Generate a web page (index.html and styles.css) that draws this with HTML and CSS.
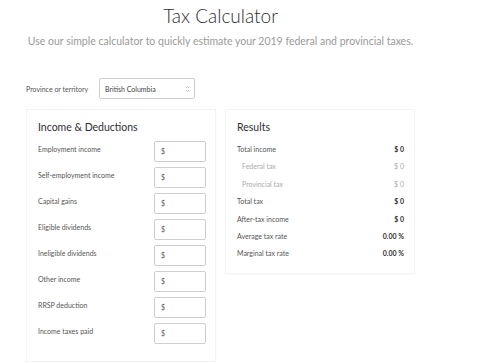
FILE: index.html
```html
<!DOCTYPE html>
<html lang="en">

<head>
    <meta charset="UTF-8">
    <meta name="viewport" content="width=device-width, initial-scale=1.0">
    <title>Tax Calculator</title>
    <link rel="stylesheet" href="styles.css">
</head>

<body>
    <div class="page">
        <h1 class="title">Tax Calculator</h1>
        <p class="intro">Use our simple calculator to quickly estimate your 2019 federal and provincial taxes.</p>

        <div class="province">
            <label class="province-label">Province or territory</label>
            <div class="select">
                <span>British Columbia</span>
                <svg class="select-arrows" width="5" height="8" viewBox="0 0 5 8">
                    <path d="M1 3 L2.5 1.5 L4 3 M1 5 L2.5 6.5 L4 5" fill="none" stroke="#b5b5b5" stroke-width="0.9" />
                </svg>
            </div>
        </div>

        <div class="cards">
            <div class="card">
                <h2 class="card-title">Income &amp; Deductions</h2>
                <div class="field"><span class="field-label">Employment income</span><div class="money">$</div></div>
                <div class="field"><span class="field-label">Self-employment income</span><div class="money">$</div></div>
                <div class="field"><span class="field-label">Capital gains</span><div class="money">$</div></div>
                <div class="field"><span class="field-label">Eligible dividends</span><div class="money">$</div></div>
                <div class="field"><span class="field-label">Ineligible dividends</span><div class="money">$</div></div>
                <div class="field"><span class="field-label">Other income</span><div class="money">$</div></div>
                <div class="field"><span class="field-label">RRSP deduction</span><div class="money">$</div></div>
                <div class="field"><span class="field-label">Income taxes paid</span><div class="money">$</div></div>
            </div>

            <div class="card results">
                <h2 class="card-title">Results</h2>
                <div class="result"><span>Total income</span><b>$ 0</b></div>
                <div class="result sub"><span>Federal tax</span><span>$ 0</span></div>
                <div class="result sub"><span>Provincial tax</span><span>$ 0</span></div>
                <div class="result"><span>Total tax</span><b>$ 0</b></div>
                <div class="result"><span>After-tax income</span><b>$ 0</b></div>
                <div class="result"><span>Average tax rate</span><b>0.00 %</b></div>
                <div class="result"><span>Marginal tax rate</span><b>0.00 %</b></div>
            </div>
        </div>
    </div>
</body>

</html>
```

FILE: styles.css
```css
body {
    margin: 0;
    padding: 0;
    background-color: #ffffff;
    font-family: "Lato", "Open Sans", sans-serif;
    color: #333333;
}

.page {
    width: 389px;
    margin-left: 26px;
}

.title {
    margin: 5px 0 0 0;
    font-size: 19px;
    font-weight: 300;
    line-height: 22px;
    text-align: center;
    color: #2e2e33;
}

.intro {
    margin: 8px 0 0 0;
    font-size: 10.5px;
    line-height: 13px;
    text-align: center;
    color: #9a9a9a;
    white-space: nowrap;
}

.province {
    display: flex;
    align-items: center;
    margin-top: 30px;
}

.province-label {
    width: 73px;
    font-size: 7px;
    color: #555555;
}

.select {
    display: flex;
    justify-content: space-between;
    align-items: center;
    width: 96px;
    height: 21px;
    box-sizing: border-box;
    padding: 0 4px 0 5px;
    border: 1px solid #cfcfcf;
    border-radius: 2px;
    font-size: 7px;
    color: #444444;
}

.cards {
    display: flex;
    align-items: flex-start;
    gap: 9px;
    margin-top: 10px;
}

.card {
    width: 190px;
    box-sizing: border-box;
    padding: 10px 9px 12px 11px;
    border: 1px solid #f3f3f3;
    box-shadow: 0 1px 2px rgba(0, 0, 0, 0.03);
}

.card-title {
    margin: 0 0 7px 0;
    font-size: 10.5px;
    font-weight: 400;
    line-height: 14px;
    color: #2e2e33;
}

.field {
    display: flex;
    justify-content: space-between;
    height: 21px;
    margin-bottom: 5px;
}

.field-label {
    padding-top: 4px;
    font-size: 7px;
    color: #555555;
}

.money {
    width: 52px;
    height: 21px;
    box-sizing: border-box;
    padding-left: 6px;
    border: 1px solid #cfcfcf;
    border-radius: 2px;
    font-size: 7px;
    line-height: 19px;
    color: #555555;
}

.results {
    padding-right: 10px;
    padding-bottom: 10px;
}

.result {
    display: flex;
    justify-content: space-between;
    font-size: 7px;
    line-height: 17.4px;
    color: #555555;
}

.result b {
    color: #333333;
}

.result.sub {
    padding-left: 5px;
    color: #aaaaaa;
}
```
